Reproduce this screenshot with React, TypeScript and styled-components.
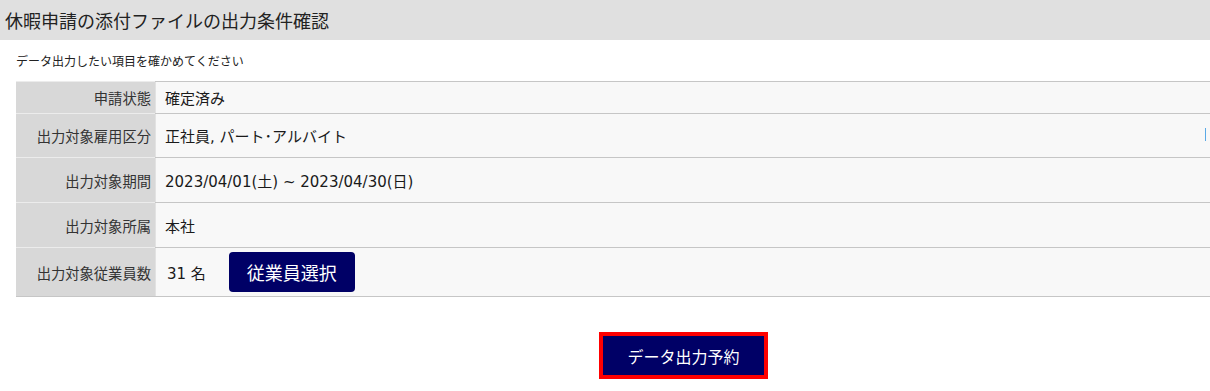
import React from 'react';
import styled, {createGlobalStyle} from 'styled-components';

const GlobalStyle = createGlobalStyle`
  body
  {
    margin: 0;
    background: #ffffff;
    font-family: "Noto Sans CJK JP", "Noto Sans", sans-serif;
    color: #222222;
  }
`

const rows: {label: string; value: React.ReactNode; height: number}[] = [
  {label: '申請状態', value: '確定済み', height: 32},
  {label: '出力対象雇用区分', value: '正社員, パート･アルバイト', height: 44},
  {label: '出力対象期間', value: '2023/04/01(土) ~ 2023/04/30(日)', height: 45},
  {label: '出力対象所属', value: '本社', height: 45},
];

const App: React.FC = () =>
{
  return (
    <>
      <GlobalStyle />
      <Header>休暇申請の添付ファイルの出力条件確認</Header>
      <Body>
        <Lead>データ出力したい項目を確かめてください</Lead>
        <Table>
          {rows.map((row, i) => (
            <Row key={row.label} $height={row.height}>
              <Label>{row.label}</Label>
              <Value>
                {row.value}
                {i === 1 && <Caret />}
              </Value>
            </Row>
          ))}
          <Row $height={50} $last>
            <Label>出力対象従業員数</Label>
            <Value>
              <Count>31 名</Count>
              <SelectButton>従業員選択</SelectButton>
            </Value>
          </Row>
        </Table>
        <Actions>
          <SubmitButton>データ出力予約</SubmitButton>
        </Actions>
      </Body>
    </>
  );
}

const Header = styled.h1`
  margin: 0;
  height: 40px;
  line-height: 40px;
  padding-left: 5px;
  background: #e0e0e0;
  font-size: 18px;
  font-weight: 400;
  color: #222222;
`

const Body = styled.main`
  padding-left: 16px;
`

const Lead = styled.p`
  margin: 0;
  height: 41px;
  line-height: 42px;
  font-size: 12px;
  color: #222222;
`

const Table = styled.div`
  display: flex;
  flex-direction: column;
`

const Row = styled.div<{$height: number; $last?: boolean}>`
  display: grid;
  grid-template-columns: 139px 1fr;
  height: ${p => p.$height}px;
  border-top: 1px solid #c6c6c6;
  ${p => p.$last && 'border-bottom: 1px solid #c6c6c6;'}
  box-sizing: border-box;
`

const Label = styled.div`
  display: flex;
  align-items: center;
  justify-content: flex-end;
  padding-right: 4px;
  background: #d8d8d8;
  border-top: 1px solid #ececec;
  margin-top: -1px;
  font-size: 14.3px;
  color: #333333;
`

const Value = styled.div`
  position: relative;
  display: flex;
  align-items: center;
  gap: 23px;
  padding-left: 9px;
  background: #f8f8f8;
  border-left: 1px solid #e2e2e2;
  font-family: "DejaVu Sans", "Noto Sans CJK JP", sans-serif;
  font-size: 15px;
  color: #1a1a1a;
`

const Caret = styled.span`
  position: absolute;
  right: 4px;
  top: 14px;
  width: 1px;
  height: 13px;
  background: #5aa9e6;
`

const Count = styled.span`
  padding-left: 2px;
`

const SelectButton = styled.button`
  width: 126px;
  height: 40px;
  border: none;
  border-radius: 4px;
  background: #000066;
  color: #ffffff;
  font-family: "Noto Sans CJK JP", sans-serif;
  font-size: 18px;
`

const Actions = styled.div`
  padding: 35px 0 0 583px;
`

const SubmitButton = styled.button`
  width: 169px;
  height: 47px;
  border: 4px solid #ff0000;
  background: #000066;
  color: #ffffff;
  font-family: inherit;
  font-size: 16px;
`

export default App
